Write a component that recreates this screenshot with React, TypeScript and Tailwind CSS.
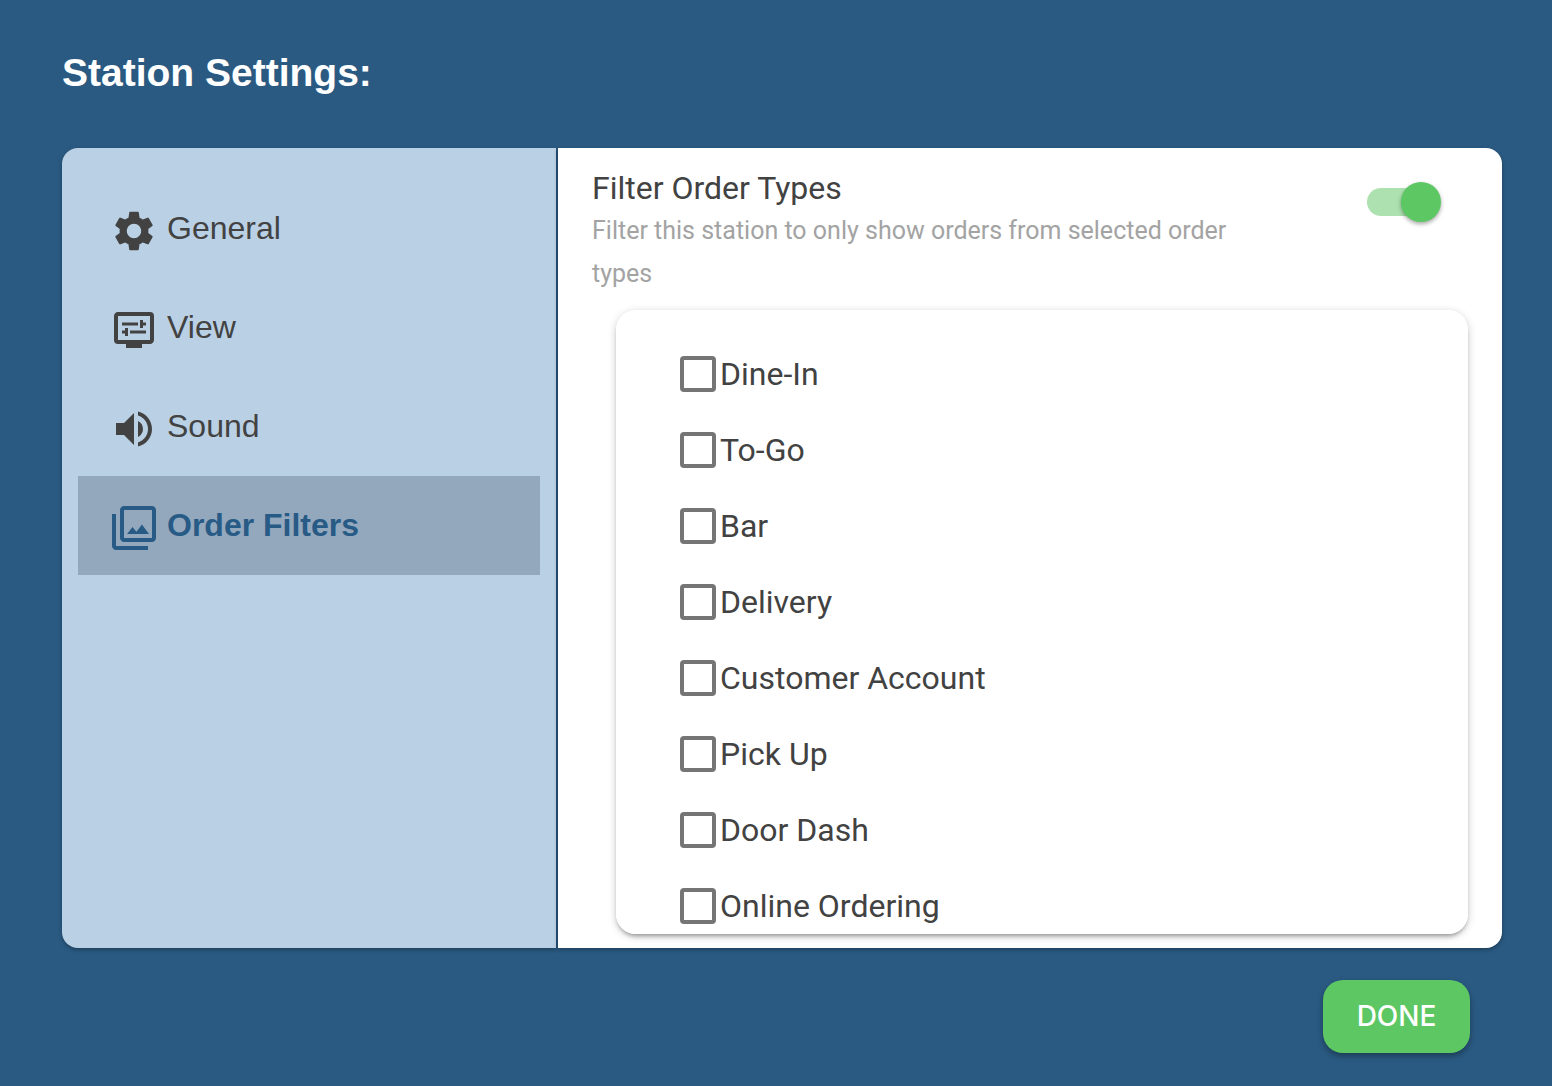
import clsx from 'clsx';
import { useState } from 'react';
import { MdDisplaySettings, MdFilter, MdSettings, MdVolumeUp } from 'react-icons/md';

const tabs = [
  { name: 'General', icon: MdSettings },
  { name: 'View', icon: MdDisplaySettings },
  { name: 'Sound', icon: MdVolumeUp },
  { name: 'Order Filters', icon: MdFilter },
];

const orderTypes = [
  'Dine-In',
  'To-Go',
  'Bar',
  'Delivery',
  'Customer Account',
  'Pick Up',
  'Door Dash',
  'Online Ordering',
];

function Sidebar() {
  const [active, setActive] = useState('Order Filters');
  return (
    <nav className="w-[494px] shrink-0 rounded-l-2xl bg-[#bad0e5] px-4 pt-[31px] shadow-[0_2px_4px_rgba(0,0,0,0.3)]">
      {tabs.map(({ name, icon: Icon }) => (
        <button
          key={name}
          type="button"
          onClick={() => setActive(name)}
          className={clsx(
            'flex h-[99px] w-full cursor-pointer items-center gap-[9px] pl-8 text-left text-[32px] leading-10',
            active === name ? 'bg-[#94a8bd] font-bold text-[#275b86]' : 'text-[#424242]'
          )}
        >
          <Icon className="mt-1 h-12 w-12 shrink-0" />
          <span className="mb-0.5">{name}</span>
        </button>
      ))}
    </nav>
  );
}

function OrderFilters() {
  const [enabled, setEnabled] = useState(true);
  const [selected, setSelected] = useState<string[]>([]);

  const toggle = (type: string) =>
    setSelected(prev => (prev.includes(type) ? prev.filter(t => t !== type) : [...prev, type]));

  return (
    <section className="flex min-w-0 flex-1 flex-col rounded-r-2xl bg-white px-[34px] pt-[19px] pb-3.5 font-[Roboto,sans-serif] text-[#424242] shadow-[0_2px_4px_rgba(0,0,0,0.3)]">
      <div className="flex items-start justify-between">
        <div className="w-3/4">
          <label htmlFor="filter-order-types" className="block text-[32px] leading-[42px]">
            Filter Order Types
          </label>
          <p className="text-[25px] leading-[43px] text-[#a3a3a3]">
            Filter this station to only show orders from selected order types
          </p>
        </div>
        <input
          id="filter-order-types"
          type="checkbox"
          role="switch"
          checked={enabled}
          onChange={() => setEnabled(prev => !prev)}
          className="mt-[21px] mr-[33px] h-7 w-[68px] shrink-0 cursor-pointer appearance-none rounded-full bg-gray-400 before:-mt-1.5 before:block before:h-10 before:w-10 before:rounded-full before:bg-white before:shadow-[0_2px_4px_rgba(0,0,0,0.35)] before:transition checked:bg-[#ade2b0] checked:before:translate-x-[34px] checked:before:bg-[#5cc763]"
        />
      </div>
      <ul className="mt-[15px] ml-6 min-h-0 flex-1 overflow-y-auto rounded-[20px] bg-white pt-[26px] pl-16 shadow-[0_4px_4px_-2px_rgba(0,0,0,0.3),0_2px_8px_rgba(0,0,0,0.2)] [scrollbar-width:none]">
        {orderTypes.map(type => (
          <li key={type}>
            <label className="flex h-[76px] cursor-pointer items-center gap-1 text-[32px] leading-12">
              <input
                type="checkbox"
                checked={selected.includes(type)}
                onChange={() => toggle(type)}
                className="h-9 w-9 shrink-0 appearance-none rounded border-4 border-[#757575] checked:bg-[#757575]"
              />
              {type}
            </label>
          </li>
        ))}
      </ul>
    </section>
  );
}

export default function App() {
  return (
    <main className="flex h-screen min-h-[600px] flex-col bg-[#2a5a82] pt-12 pr-[50px] pb-[33px] pl-[62px] font-[Liberation_Sans,Arial,sans-serif]">
      <h1 className="text-[39px] leading-[50px] font-bold text-white">Station Settings:</h1>
      <div className="mt-[50px] flex min-h-0 flex-1 gap-0.5">
        <Sidebar />
        <OrderFilters />
      </div>
      <button
        type="button"
        className="mt-8 mr-8 min-w-[147px] cursor-pointer self-end rounded-[20px] bg-[#5cc763] px-8 py-4 font-[Inter,sans-serif] text-[28px] leading-[41px] font-medium text-white shadow-[0_3px_6px_rgba(0,0,0,0.35)]"
      >
        DONE
      </button>
    </main>
  );
}
